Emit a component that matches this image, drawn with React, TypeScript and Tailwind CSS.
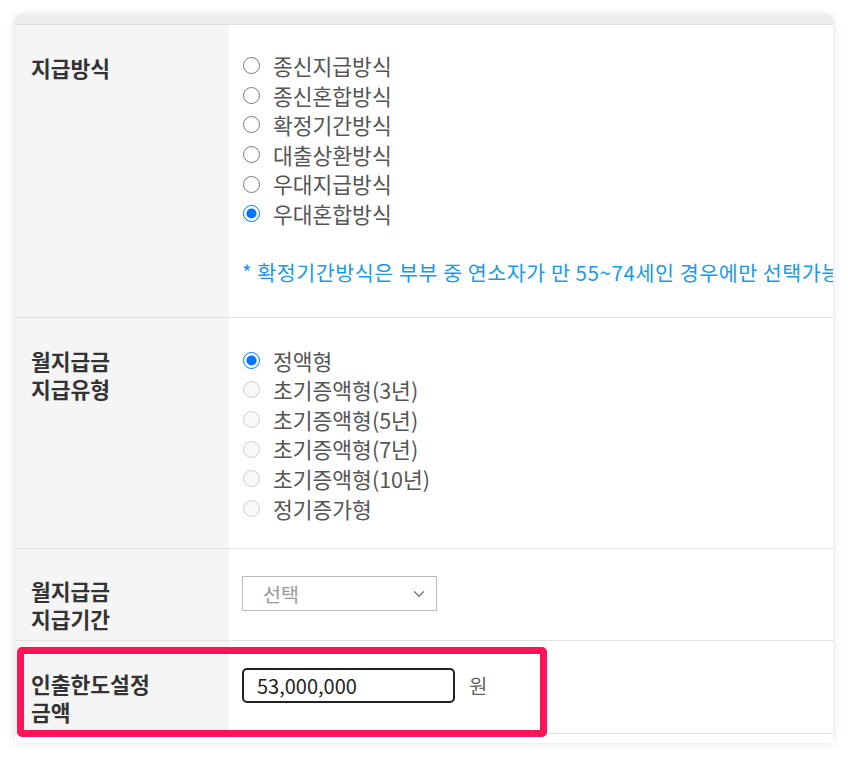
import { ChevronDown } from 'lucide-react';

const methods = ['종신지급방식', '종신혼합방식', '확정기간방식', '대출상환방식', '우대지급방식', '우대혼합방식'];
const payTypes = ['정액형', '초기증액형(3년)', '초기증액형(5년)', '초기증액형(7년)', '초기증액형(10년)', '정기증가형'];

function RadioItem({ label, name, checked, disabled }: { label: string; name: string; checked?: boolean; disabled?: boolean }) {
  return (
    <label className="flex items-center h-[29.6px] text-[21.5px] text-[#555]">
      <input
        type="radio"
        name={name}
        defaultChecked={checked}
        disabled={disabled}
        className="w-[17px] h-[17px] m-0 ml-px shrink-0"
      />
      <span className="ml-[13px] leading-[29.6px]">{label}</span>
    </label>
  );
}

function Label({ lines, pt }: { lines: string[]; pt: string }) {
  return (
    <div className={`bg-[#f5f5f5] pl-4 ${pt} pb-[7px] text-[21.5px] font-bold text-[#333] leading-[28px]`}>
      {lines.map((l) => (
        <div key={l}>{l}</div>
      ))}
    </div>
  );
}

export default function App() {
  return (
    <div
      className="w-[848px] h-[759px] bg-white pt-[15px] pl-[15px]"
      style={{ fontFamily: '"Noto Sans CJK KR", "Noto Sans", sans-serif' }}
    >
      <div className="w-[818px] bg-white rounded-t-[6px] shadow-[0_0_8px_rgba(0,0,0,0.13)] overflow-hidden pb-[9px]">
        <div className="h-[9px] bg-[#ececec]" />
        <div className="border-t border-[#dedede]">
          {/* 지급방식 */}
          <div className="grid grid-cols-[214px_1fr] border-b border-[#e2e2e2]">
            <Label lines={['지급방식']} pt="pt-[29px]" />
            <div className="pl-[13px] pt-[26px] pb-[31px] overflow-hidden">
              {methods.map((m, i) => (
                <RadioItem key={m} label={m} name="method" checked={i === 5} />
              ))}
              <p className="mt-[30px] text-[20.6px] tracking-[0.55px] leading-[27px] text-[#1a9ae6] whitespace-nowrap">
                * 확정기간방식은 부부 중 연소자가 만 55~74세인 경우에만 선택가능합니다.
              </p>
            </div>
          </div>

          {/* 월지급금 지급유형 */}
          <div className="grid grid-cols-[214px_1fr] border-b border-[#e2e2e2]">
            <Label lines={['월지급금', '지급유형']} pt="pt-[29px]" />
            <div className="pl-[13px] pt-[28px] pb-[25px]">
              {payTypes.map((t, i) => (
                <RadioItem key={t} label={t} name="paytype" checked={i === 0} disabled={i !== 0} />
              ))}
            </div>
          </div>

          {/* 월지급금 지급기간 */}
          <div className="grid grid-cols-[214px_1fr] border-b border-[#e2e2e2]">
            <Label lines={['월지급금', '지급기간']} pt="pt-[28px]" />
            <div className="pl-[13px] pt-[27px]">
              <div className="w-[195px] h-[35px] border border-[#bbb] flex items-center justify-between pl-5 pr-[8px] text-[19.5px] text-[#999]">
                <span>선택</span>
                <ChevronDown className="w-[18px] h-[18px] text-[#777]" strokeWidth={1.8} />
              </div>
            </div>
          </div>

          {/* 인출한도설정 금액 */}
          <div className="relative grid grid-cols-[214px_1fr] border-b border-[#e2e2e2]">
            <Label lines={['인출한도설정', '금액']} pt="pt-[29px]" />
            <div className="pl-[13px] pt-[27px] flex items-start gap-[14px]">
              <div className="w-[213px] h-[35px] border-2 border-[#222] rounded-[5px] flex items-center pl-[13px] text-[20px] text-[#222]">
                53,000,000
              </div>
              <span className="text-[20px] text-[#666] leading-[35px]">원</span>
            </div>
            <div className="absolute left-[2px] top-[6px] w-[530px] h-[90px] border-[7px] border-[#ff1458] rounded-[5px] pointer-events-none" />
          </div>
        </div>
      </div>
    </div>
  );
}
